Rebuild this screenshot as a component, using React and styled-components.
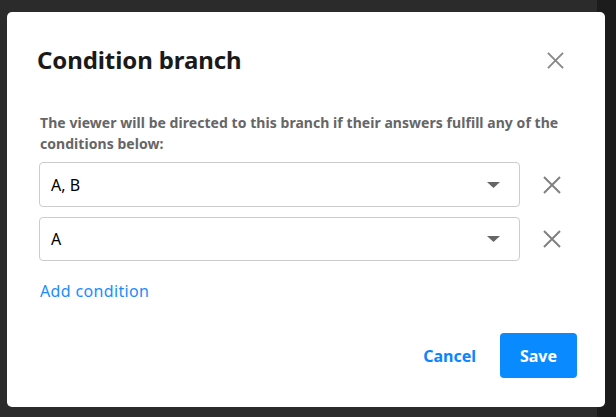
import styled, { createGlobalStyle } from "styled-components";

const GlobalStyle = createGlobalStyle`
  body {
    margin: 0;
    font-family: "Noto Sans", "Open Sans", sans-serif;
  }
`;

const Page = styled.div`
  height: 417px;
  background: linear-gradient(to right, #2b2b2b 597px, #1c1c1c 597px);
  padding: 12px 0 0 7px;
  box-sizing: border-box;
  overflow: hidden;
`;

const Modal = styled.div`
  width: 598px;
  height: 395px;
  background: #fff;
  border-radius: 5px;
  display: flex;
  flex-direction: column;
  box-sizing: border-box;
`;

const Body = styled.div`
  padding: 32px 38px 0 32px;
`;

const Header = styled.div`
  display: flex;
  align-items: center;
  justify-content: space-between;
`;

const Title = styled.h2`
  margin: 0 0 0 -2px;
  font-size: 24px;
  line-height: 32px;
  font-weight: 700;
  letter-spacing: -0.1px;
  color: #1a1a1a;
`;

const IconButton = styled.button`
  width: 24px;
  height: 24px;
  padding: 0;
  border: none;
  background: none;
  display: flex;
  align-items: center;
  justify-content: center;
  color: ${(props) => props.color || "#888"};
  margin-right: ${(props) => props.shift || 0}px;
  flex-shrink: 0;
  cursor: pointer;
`;

const Description = styled.p`
  margin: 36px 0 8px 1px;
  font-size: 14px;
  line-height: 21px;
  font-weight: 700;
  letter-spacing: 0.05px;
  color: #666;
`;

const ConditionList = styled.div`
  display: flex;
  flex-direction: column;
  gap: 10px;
`;

const ConditionRow = styled.div`
  display: flex;
  align-items: center;
  gap: 20px;
`;

const Select = styled.div`
  flex: 1;
  height: ${(props) => props.height}px;
  box-sizing: border-box;
  border: 1px solid #cccccc;
  border-radius: 4px;
  display: flex;
  align-items: center;
  justify-content: space-between;
  padding: 0 19px 0 11px;
  font-size: 16px;
  color: #000;
`;

const AddLink = styled.a`
  display: inline-block;
  margin: 18px 0 0 1px;
  font-size: 16px;
  line-height: 24px;
  letter-spacing: 0.35px;
  color: #1a8cff;
  cursor: pointer;
`;

const Footer = styled.div`
  margin-top: auto;
  display: flex;
  justify-content: flex-end;
  align-items: center;
  gap: 12px;
  padding: 0 28px 29px 0;
`;

const TextButton = styled.button`
  border: none;
  background: none;
  font-family: inherit;
  font-size: 16px;
  font-weight: 700;
  color: #0a84ff;
  padding: 0 12px;
  height: 45px;
  cursor: pointer;
`;

const PrimaryButton = styled.button`
  border: none;
  border-radius: 4px;
  background: #0a8aff;
  color: #fff;
  font-family: inherit;
  font-size: 16px;
  font-weight: 700;
  width: 77px;
  height: 45px;
  cursor: pointer;
`;

function CloseIcon({ size }) {
  return (
    <svg width={size} height={size} viewBox="0 0 18 18" fill="none">
      <path d="M1 1L17 17M17 1L1 17" stroke="currentColor" strokeWidth="2" />
    </svg>
  );
}

function Caret() {
  return (
    <svg width="13" height="6" viewBox="0 0 13 6">
      <path d="M0 0H13L6.5 6Z" fill="#666" />
    </svg>
  );
}

const conditions = [
  { id: 1, value: "A, B", height: 45 },
  { id: 2, value: "A", height: 44 },
];

function App() {
  return (
    <Page>
      <GlobalStyle />
      <Modal>
        <Body>
          <Header>
            <Title>Condition branch</Title>
            <IconButton color="#888">
              <CloseIcon size={17} />
            </IconButton>
          </Header>

          <Description>
            The viewer will be directed to this branch if their answers fulfill
            any of the conditions below:
          </Description>

          <ConditionList>
            {conditions.map((item) => (
              <ConditionRow key={item.id}>
                <Select height={item.height}>
                  <span>{item.value}</span>
                  <Caret />
                </Select>
                <IconButton color="#808080" shift={3}>
                  <CloseIcon size={18} />
                </IconButton>
              </ConditionRow>
            ))}
          </ConditionList>

          <AddLink>Add condition</AddLink>
        </Body>

        <Footer>
          <TextButton>Cancel</TextButton>
          <PrimaryButton>Save</PrimaryButton>
        </Footer>
      </Modal>
    </Page>
  );
}

export default App;
